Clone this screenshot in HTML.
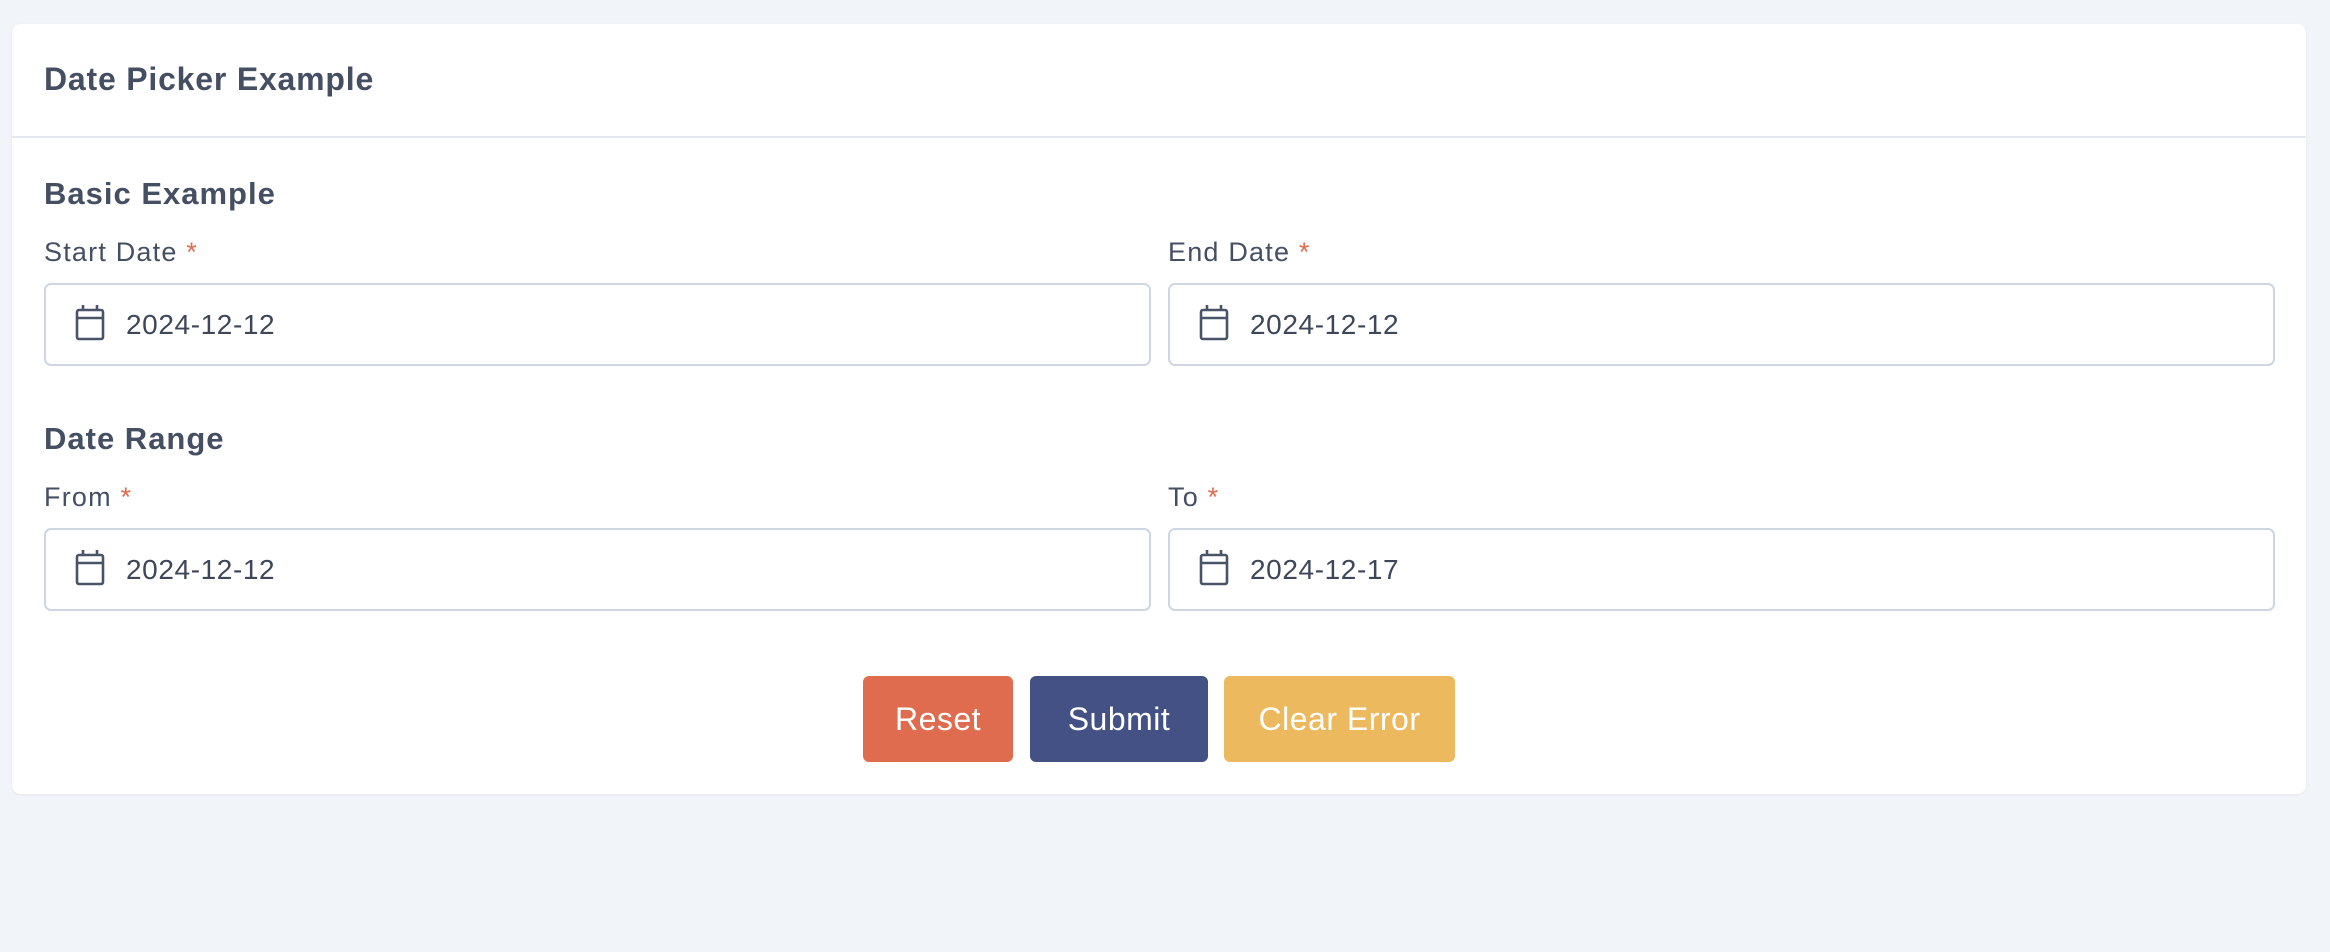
<!DOCTYPE html>
<html><head><meta charset="utf-8"><style>
*{box-sizing:border-box;margin:0;padding:0}
body{width:2330px;height:952px;background:#f1f4f9;font-family:"Liberation Sans",sans-serif;color:#475467;position:relative;overflow:hidden}
.card{position:absolute;left:12px;top:24px;width:2294px;height:770px;background:#fff;border-radius:9px;box-shadow:0 1px 3px rgba(0,0,0,.05)}
.abs{position:absolute;white-space:nowrap}
.h1{font-size:32px;font-weight:bold;color:#454f63;letter-spacing:0.8px}
.h2{font-size:31px;font-weight:bold;color:#454f63;letter-spacing:1px}
.lbl{font-size:27px;color:#454f63;letter-spacing:1.2px}
.lbl b{color:#e06c4f;font-weight:normal}
.inp{position:absolute;height:83px;border:2px solid #cdd6e1;border-radius:7px;background:#fff}
.inp svg{position:absolute;left:28px;top:19px}
.inp span{position:absolute;left:80px;top:24px;font-size:28px;color:#3d4759;letter-spacing:0.6px}
.btn{position:absolute;top:676px;height:86px;border-radius:6px;color:#fff;font-size:32px;display:flex;align-items:center;justify-content:center;letter-spacing:0.5px}
</style></head><body>
<div class="card"></div>
<div class="abs h1" style="left:44px;top:61px">Date Picker Example</div>
<div class="abs" style="left:12px;top:136px;width:2294px;height:2px;background:#e5e8ee"></div>
<div class="abs h2" style="left:44px;top:176px">Basic Example</div>
<div class="abs lbl" style="left:44px;top:237px">Start Date <b>*</b></div>
<div class="abs lbl" style="left:1168px;top:237px">End Date <b>*</b></div>
<div class="inp" style="left:44px;top:283px;width:1107px"><svg width="32" height="38" viewBox="0 0 32 38" fill="none" stroke="#4a5468" stroke-width="2.6"><rect x="3" y="6" width="26" height="29" rx="2"/><line x1="3" y1="14" x2="29" y2="14"/><line x1="9" y1="1" x2="9" y2="7"/><line x1="23" y1="1" x2="23" y2="7"/></svg><span>2024-12-12</span></div>
<div class="inp" style="left:1168px;top:283px;width:1107px"><svg width="32" height="38" viewBox="0 0 32 38" fill="none" stroke="#4a5468" stroke-width="2.6"><rect x="3" y="6" width="26" height="29" rx="2"/><line x1="3" y1="14" x2="29" y2="14"/><line x1="9" y1="1" x2="9" y2="7"/><line x1="23" y1="1" x2="23" y2="7"/></svg><span>2024-12-12</span></div>
<div class="abs h2" style="left:44px;top:421px">Date Range</div>
<div class="abs lbl" style="left:44px;top:482px">From <b>*</b></div>
<div class="abs lbl" style="left:1168px;top:482px">To <b>*</b></div>
<div class="inp" style="left:44px;top:528px;width:1107px"><svg width="32" height="38" viewBox="0 0 32 38" fill="none" stroke="#4a5468" stroke-width="2.6"><rect x="3" y="6" width="26" height="29" rx="2"/><line x1="3" y1="14" x2="29" y2="14"/><line x1="9" y1="1" x2="9" y2="7"/><line x1="23" y1="1" x2="23" y2="7"/></svg><span>2024-12-12</span></div>
<div class="inp" style="left:1168px;top:528px;width:1107px"><svg width="32" height="38" viewBox="0 0 32 38" fill="none" stroke="#4a5468" stroke-width="2.6"><rect x="3" y="6" width="26" height="29" rx="2"/><line x1="3" y1="14" x2="29" y2="14"/><line x1="9" y1="1" x2="9" y2="7"/><line x1="23" y1="1" x2="23" y2="7"/></svg><span>2024-12-17</span></div>
<div class="btn" style="left:863px;width:150px;background:#e06c4f">Reset</div>
<div class="btn" style="left:1030px;width:178px;background:#435184">Submit</div>
<div class="btn" style="left:1224px;width:231px;background:#ecb95e">Clear Error</div>
</body></html>
